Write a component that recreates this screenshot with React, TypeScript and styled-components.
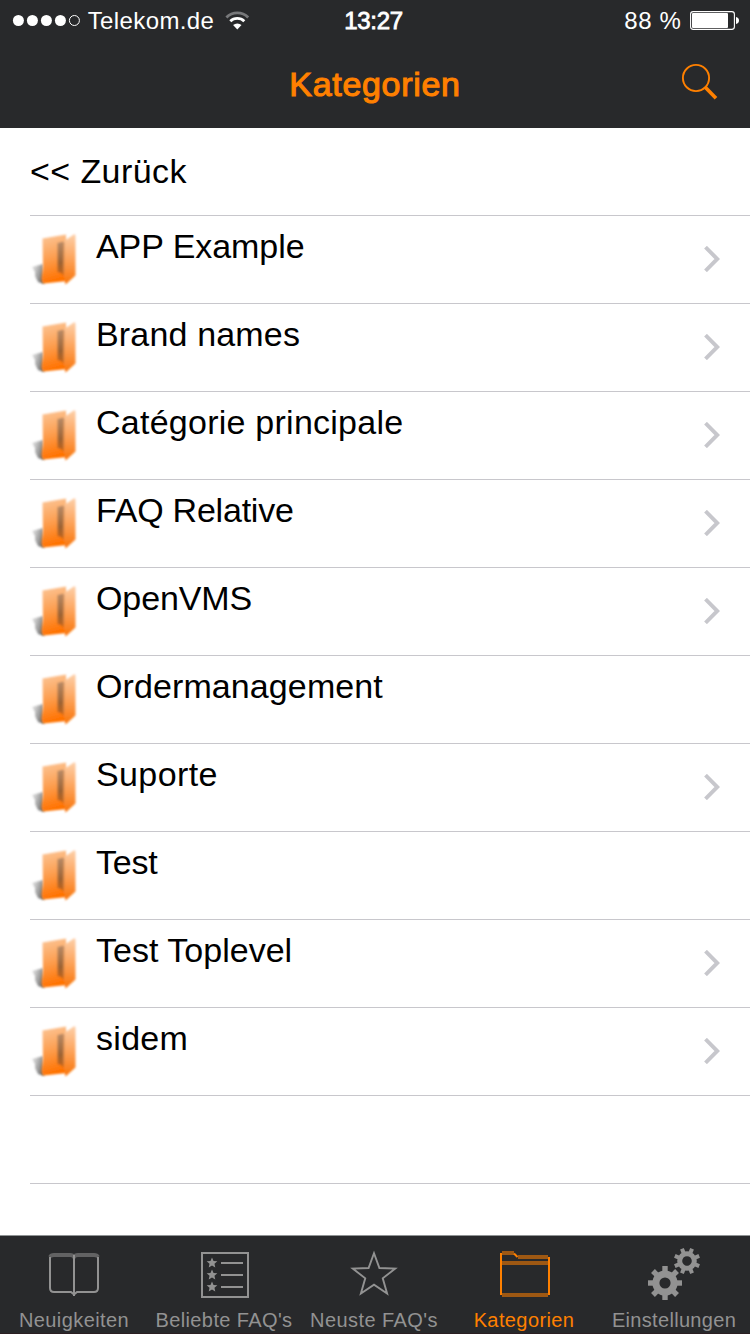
import React from "react";
import styled, { createGlobalStyle } from "styled-components";

const ORANGE = "#ff8000";
const GREY = "#929292";

const GlobalStyle = createGlobalStyle`
  * { box-sizing: border-box; }
  body { margin: 0; background: #fff; font-family: "Liberation Sans", Arial, sans-serif; }
  svg { display: block; flex: none; }
`;

const Screen = styled.div`
  width: 750px;
  height: 1334px;
  display: flex;
  flex-direction: column;
  overflow: hidden;
  background: #fff;
`;

const StatusBar = styled.div`
  height: 40px;
  display: grid;
  grid-template-columns: 1fr auto 1fr;
  align-items: center;
  padding: 2px 10px 0 12px;
  background: #28292b;
  color: #fff;
`;

const StatusGroup = styled.div<{ $end?: boolean }>`
  display: flex;
  align-items: center;
  justify-content: ${(p) => (p.$end ? "flex-end" : "flex-start")};
`;

const StatusText = styled.span<{ $spacing: number; $strong?: boolean }>`
  font-size: 24px;
  line-height: 28px;
  white-space: pre;
  letter-spacing: ${(p) => p.$spacing}px;
  padding-right: ${(p) => (p.$strong ? 5 : 1)}px;
  -webkit-text-stroke: ${(p) => (p.$strong ? "0.8px" : "0")};
`;

const NavBar = styled.header`
  height: 88px;
  display: grid;
  grid-template-columns: 1fr auto 1fr;
  align-items: center;
  background: #28292b;
  color: ${ORANGE};
`;

const Title = styled.h1`
  grid-column: 2;
  margin: 0;
  font-size: 34px;
  line-height: 40px;
  font-weight: 400;
  letter-spacing: 0.7px;
  -webkit-text-stroke: 1.1px;
`;

const SearchButton = styled.button`
  justify-self: end;
  margin: 0 32px 6px 0;
  padding: 0;
  border: 0;
  background: none;
`;

const List = styled.main`
  flex: 1;
  overflow: hidden;
  padding-left: 30px;
`;

const Row = styled.div`
  height: 88px;
  display: flex;
  align-items: center;
  padding-right: 30px;
  border-bottom: 1px solid #c8c7cc;
`;

const RowLabel = styled.span<{ $spacing: number; $raised?: boolean }>`
  flex: 1;
  font-size: 34px;
  line-height: 40px;
  color: #000;
  letter-spacing: ${(p) => p.$spacing}px;
  padding-bottom: ${(p) => (p.$raised ? 27 : 2)}px;
`;

const TabBar = styled.nav`
  height: 99px;
  display: grid;
  grid-template-columns: repeat(5, 150px);
  border-top: 1px solid #8f9394;
  border-bottom: 1px solid #2b1f22;
  background: #28292b;
`;

const Tab = styled.div<{ $active?: boolean }>`
  display: flex;
  flex-direction: column;
  align-items: center;
  padding-top: 10px;
  color: ${(p) => (p.$active ? ORANGE : GREY)};
`;

const TabLabel = styled.span<{ $spacing: number }>`
  margin: 2px 2px 0 0;
  font-size: 20px;
  line-height: 24px;
  white-space: nowrap;
  letter-spacing: ${(p) => p.$spacing}px;
`;

const SignalDots = () => (
  <svg width="69" height="14" viewBox="0 0 69 14">
    {[6.4, 20.4, 34.4, 48.4].map((x) => (
      <circle key={x} cx={x} cy="6.500" r="5.5" fill="#fff" />
    ))}
    <circle cx="62.4" cy="6.500" r="5" fill="none" stroke="#fff" strokeWidth="1" />
  </svg>
);

const Wifi = () => (
  <svg width="28" height="20" viewBox="0 0 28 20" fill="none" strokeWidth="2.8">
    <path d="M4.400 6.400a15.500 15.500 0 0 1 21.800 0" stroke="#77787a" />
    <path d="M8.300 10.300a10 10 0 0 1 14 0" stroke="#fff" />
    <path d="M15.300 18.400l-4.200-4.300a6.200 6.200 0 0 1 8.400 0z" fill="#fff" />
  </svg>
);

const Battery = () => (
  <svg width="50" height="20" viewBox="0 0 50 20">
    <rect x="0.6" y="0.6" width="43.8" height="17.8" rx="2.6" fill="none" stroke="#fff" strokeWidth="1.1" />
    <rect x="2" y="2" width="36" height="15" rx="1" fill="#fff" />
    <path d="M46 6c4 .5 4 6.500 0 7z" fill="#fff" />
  </svg>
);

const SearchIcon = () => (
  <svg width="38" height="38" viewBox="0 0 38 38" fill="none" stroke={ORANGE}>
    <circle cx="16" cy="16" r="13.1" strokeWidth="1.9" />
    <path d="M25.500 25.500L36 36.300" strokeWidth="3.6" />
  </svg>
);

const FolderIcon = () => (
  <svg width="66" height="60" viewBox="0 0 66 60">
    <defs>
      <linearGradient id="folderBody" x1="0" y1="0" x2="0.15" y2="1">
        <stop offset="0" stopColor="#fcc79a" />
        <stop offset="0.5" stopColor="#fda053" />
        <stop offset="1" stopColor="#ff7200" />
      </linearGradient>
      <linearGradient id="folderFlap" x1="0" y1="0" x2="0" y2="1">
        <stop offset="0" stopColor="#fdcfa8" />
        <stop offset="0.5" stopColor="#fda35a" />
        <stop offset="1" stopColor="#f87409" />
      </linearGradient>
      <linearGradient id="folderInner" x1="0" y1="0" x2="0" y2="1">
        <stop offset="0" stopColor="#b98c68" />
        <stop offset="0.6" stopColor="#9c6335" />
        <stop offset="1" stopColor="#ca6415" />
      </linearGradient>
      <linearGradient id="folderShade" x1="0" y1="0" x2="1" y2="0.5">
        <stop offset="0" stopColor="#999" stopOpacity="0.25" />
        <stop offset="1" stopColor="#555" stopOpacity="0.85" />
      </linearGradient>
      <filter id="folderSoft" x="-20%" y="-20%" width="140%" height="140%">
        <feGaussianBlur stdDeviation="0.85" />
      </filter>
      <filter id="folderShadeSoft" x="-20%" y="-20%" width="140%" height="140%">
        <feGaussianBlur stdDeviation="1" />
      </filter>
    </defs>
    <path d="M2 37L13 34L14 54L8 52L5 46L5 42Z" fill="url(#folderShade)" filter="url(#folderShadeSoft)" />
    <g filter="url(#folderSoft)">
      <path d="M12.500 8.500L36 4.500L37 51L13.500 53.500Q11.500 52 11.500 48.500L13 37Z" fill="url(#folderBody)" />
      <path d="M27.500 13L33.500 11.500L33 40L35.500 47L31 43L27.500 42Z" fill="url(#folderInner)" />
      <path d="M33.500 11.500L44.500 4Q45.500 4.500 45.500 7V45.500L35.500 54.500L33.500 43Z" fill="url(#folderFlap)" />
      <path d="M33.800 12V42" stroke="#b67542" strokeWidth="0.8" />
    </g>
  </svg>
);

const ChevronIcon = styled.svg`
  margin-bottom: 2px;
`;

const Chevron = () => (
  <ChevronIcon width="16" height="26" viewBox="0 0 16 26">
    <path d="M1.500 1.200L13.300 13L1.500 24.800" fill="none" stroke="#c7c7cc" strokeWidth="3.9" />
  </ChevronIcon>
);

const BookIcon = () => (
  <svg width="150" height="60" viewBox="0 0 150 60" fill="none" stroke={GREY} strokeWidth="2">
    <path d="M50 11V42Q50 46 54 46H71L74 48.500L77 46H94Q98 46 98 42V11" />
    <path d="M74 9V50" />
    <path d="M50 11Q51 9 54 9H70Q73 9 74 11Q75 9 78 9H94Q97 9 98 11" strokeWidth="3.800" strokeOpacity="0.55" />
  </svg>
);

const starPath = (cx: number, cy: number, outer: number, inner: number) =>
  Array.from({ length: 10 }, (_, i) => {
    const r = i % 2 ? inner : outer;
    const a = (i * Math.PI) / 5;
    return `${i ? "L" : "M"}${(cx + r * Math.sin(a)).toFixed(2)} ${(cy - r * Math.cos(a)).toFixed(2)}`;
  }).join("") + "Z";

const ListIcon = () => (
  <svg width="150" height="60" viewBox="0 0 150 60" fill="none" stroke={GREY} strokeWidth="2">
    <rect x="52" y="7" width="46" height="44" />
    {[17, 29, 41].map((y) => (
      <g key={y}>
        <path d={starPath(62, y, 5.6, 2.6)} fill={GREY} stroke="none" />
        <path d={`M71 ${y}H93`} />
      </g>
    ))}
  </svg>
);

const StarIcon = () => (
  <svg width="150" height="60" viewBox="0 0 150 60" fill="none" stroke={GREY} strokeWidth="1.9">
    <path d={starPath(74, 29.5, 22.3, 9.2)} />
  </svg>
);

const TabFolderIcon = () => (
  <svg width="150" height="60" viewBox="0 0 150 60" fill="none" stroke={ORANGE} strokeWidth="2">
    <path d="M51 7V49M99 11V49" />
    <path d="M52 7H64M68 11H98M52 17H98M52 49H98" strokeWidth="4" strokeOpacity="0.55" />
    <path d="M64 7.500L67.500 11" />
  </svg>
);

type GearProps = { cx: number; cy: number; outer: number; root: number; hole: number; tooth: number; turn: number };

const Gear = ({ cx, cy, outer, root, hole, tooth, turn }: GearProps) => (
  <g transform={`translate(${cx} ${cy}) rotate(${turn})`}>
    <circle r={(root + hole) / 2} fill="none" stroke={GREY} strokeWidth={root - hole} />
    {Array.from({ length: 8 }, (_, i) => (
      <rect
        key={i}
        x={-tooth / 2}
        y={-outer}
        width={tooth}
        height={outer - root + 1}
        fill={GREY}
        transform={`rotate(${i * 45})`}
      />
    ))}
  </g>
);

const GearsIcon = () => (
  <svg width="150" height="60" viewBox="0 0 150 60">
    <Gear cx={65} cy={37} outer={17} root={12.6} hole={5.6} tooth={5.4} turn={0} />
    <Gear cx={87} cy={15} outer={13.2} root={9.8} hole={4.8} tooth={4} turn={22.5} />
  </svg>
);

const categories = [
  { name: "APP Example", spacing: -0.06, more: true },
  { name: "Brand names", spacing: 0.17, more: true },
  { name: "Catégorie principale", spacing: 0.25, more: true },
  { name: "FAQ Relative", spacing: -0.22, more: true },
  { name: "OpenVMS", spacing: -0.1, more: true },
  { name: "Ordermanagement", spacing: 0.1, more: false },
  { name: "Suporte", spacing: 0.38, more: true },
  { name: "Test", spacing: -0.2, more: false },
  { name: "Test Toplevel", spacing: 0.02, more: true },
  { name: "sidem", spacing: 0.3, more: true },
];

const tabs = [
  { label: "Neuigkeiten", spacing: 0.42, Icon: BookIcon },
  { label: "Beliebte FAQ's", spacing: 0.38, Icon: ListIcon },
  { label: "Neuste FAQ's", spacing: 0.42, Icon: StarIcon },
  { label: "Kategorien", spacing: 0.4, Icon: TabFolderIcon, active: true },
  { label: "Einstellungen", spacing: 0.32, Icon: GearsIcon },
];

export default function App() {
  return (
    <Screen>
      <GlobalStyle />
      <StatusBar>
        <StatusGroup>
          <SignalDots />
          <StatusText $spacing={0.4}> Telekom.de </StatusText>
          <Wifi />
        </StatusGroup>
        <StatusText $spacing={-0.3} $strong>13:27</StatusText>
        <StatusGroup $end>
          <StatusText $spacing={0.7}>88 % </StatusText>
          <Battery />
        </StatusGroup>
      </StatusBar>
      <NavBar>
        <Title>Kategorien</Title>
        <SearchButton aria-label="Suchen">
          <SearchIcon />
        </SearchButton>
      </NavBar>
      <List>
        <Row>
          <RowLabel $spacing={0.42}>&lt;&lt; Zurück</RowLabel>
        </Row>
        {categories.map((c) => (
          <Row key={c.name}>
            <FolderIcon />
            <RowLabel $spacing={c.spacing} $raised>
              {c.name}
            </RowLabel>
            {c.more && <Chevron />}
          </Row>
        ))}
        <Row />
      </List>
      <TabBar>
        {tabs.map(({ label, spacing, Icon, active }) => (
          <Tab key={label} $active={active}>
            <Icon />
            <TabLabel $spacing={spacing}>{label}</TabLabel>
          </Tab>
        ))}
      </TabBar>
    </Screen>
  );
}
